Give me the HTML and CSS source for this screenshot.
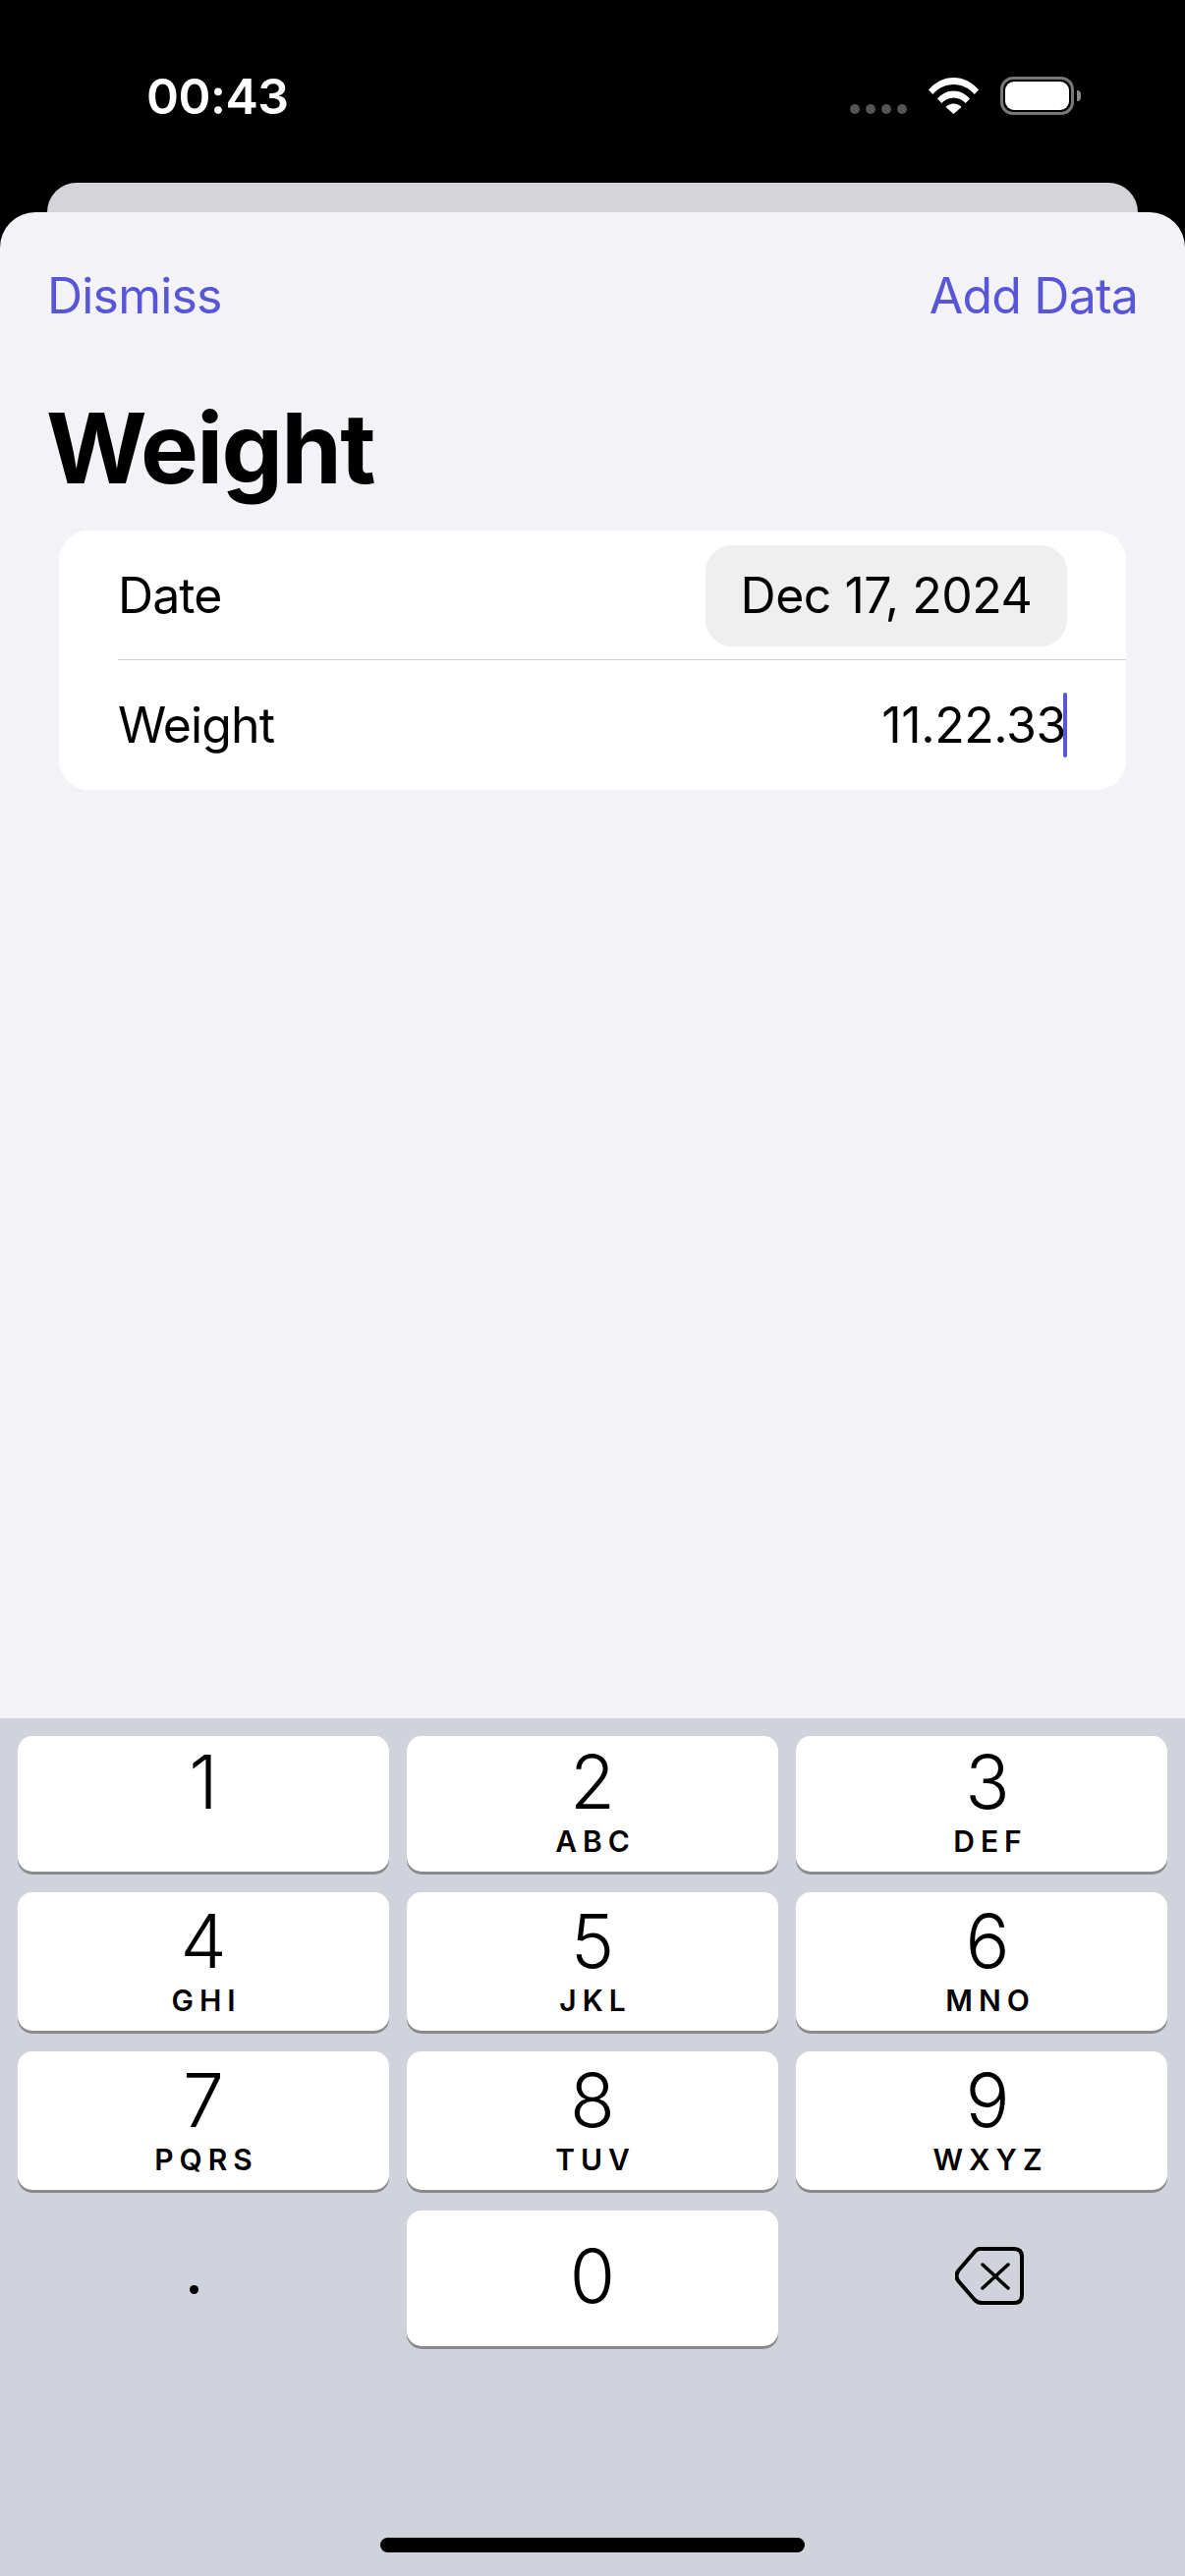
FILE: index.html
```html
<!DOCTYPE html>
<html lang="en">
<head>
<meta charset="UTF-8" />
<meta name="viewport" content="width=device-width, initial-scale=1" />
<title>Weight</title>
<link rel="stylesheet" href="styles.css">
</head>
<body>
  <div id="app">

    <!-- Status bar -->
    <div class="status">
      <span class="time">00:43</span>
      <div class="status-icons">
        <div class="signal"><i></i><i></i><i></i><i></i></div>
        <svg class="wifi" width="51" height="37" viewBox="0 0 51 37">
          <path fill="#fff" d="M0 12.5C6.5 4.8 15.4 0 25.5 0S44.500 4.800 51 12.500L46.700 17C41.300 10.800 34 7 25.500 7S9.700 10.800 4.300 17Z"/>
          <path fill="#fff" d="M9 21.500C13 16.800 19 13.500 25.500 13.500S38 16.800 42 21.500L37.700 26C34.500 22.600 30.300 20.500 25.500 20.500S16.500 22.600 13.300 26Z"/>
          <path fill="#fff" d="M17.500 30C19.500 27.900 22.300 26.600 25.500 26.600S31.500 27.900 33.500 30L25.500 37Z"/>
        </svg>
        <div class="battery"><div class="battery-fill"></div></div>
        <div class="battery-cap"></div>
      </div>
    </div>

    <div class="back-sheet"></div>

    <!-- Sheet -->
    <div class="sheet">
      <div class="nav">
        <span class="nav-btn">Dismiss</span>
        <span class="nav-btn">Add Data</span>
      </div>
      <h1>Weight</h1>
      <div class="card">
        <div class="row">
          <span class="row-label">Date</span>
          <span class="date-pill">Dec 17, 2024</span>
        </div>
        <div class="row row-last">
          <span class="row-label">Weight</span>
          <span class="row-value">11.22.33<span class="caret"></span></span>
        </div>
      </div>
    </div>

    <!-- Keypad -->
    <div class="keyboard">
      <div class="keys">
        <div class="key key-top"><span class="digit">1</span></div>
        <div class="key key-top"><span class="digit">2</span><span class="letters">ABC</span></div>
        <div class="key key-top key-right"><span class="digit">3</span><span class="letters">DEF</span></div>
        <div class="key"><span class="digit">4</span><span class="letters">GHI</span></div>
        <div class="key"><span class="digit">5</span><span class="letters">JKL</span></div>
        <div class="key key-right"><span class="digit">6</span><span class="letters">MNO</span></div>
        <div class="key"><span class="digit">7</span><span class="letters">PQRS</span></div>
        <div class="key"><span class="digit">8</span><span class="letters">TUV</span></div>
        <div class="key key-right"><span class="digit">9</span><span class="letters">WXYZ</span></div>
        <div class="key-plain"><div class="dot"></div></div>
        <div class="key key-zero"><span class="digit">0</span></div>
        <div class="key-plain">
          <svg class="backspace" width="70" height="59" viewBox="0 0 70 59" fill="none" stroke="#000" stroke-linecap="round" stroke-linejoin="round">
            <path stroke-width="4" d="M25 2H60Q68 2 68 10V49Q68 57 60 57H27Q23 57 20 54L3.500 35Q-.5 29.500 3.500 24L19 6Q22 2 25 2Z" />
            <path stroke-width="3.500" d="M28 18L54 42M54 18L28 42" />
          </svg>
        </div>
      </div>
      <div class="home-bar"></div>
    </div>

  </div>
</body>
</html>
```

FILE: styles.css
```css
/* Reset */
* {
  margin: 0; padding: 0; box-sizing: border-box;
}

html, body {
  width: 1206px;
  height: 2622px;
  overflow: hidden;
  background: #000;
  font-family: 'Inter', sans-serif;
  color: #000;
}

#app {
  width: 1206px;
  height: 2622px;
  display: flex;
  flex-direction: column;
}

/* Status bar */
.status {
  height: 186px;
  padding: 68px 106px 0 149px;
  display: flex;
  justify-content: space-between;
  align-items: flex-start;
}

.time {
  color: #fff;
  font-size: 50px;
  font-weight: 600;
  line-height: 60px;
  letter-spacing: -0.5px;
}

.status-icons {
  display: flex;
  align-items: flex-start;
  padding-top: 10px;
}

.signal {
  display: flex;
  gap: 6px;
  margin-top: 28px;
  margin-right: 22px;
}
.signal i {
  display: block;
  width: 10px;
  height: 10px;
  border-radius: 50%;
  background: #555;
}

.wifi {
  margin-top: 1px;
  margin-right: 22px;
}

.battery {
  width: 75px;
  height: 39px;
  border: 3px solid #777;
  border-radius: 13px;
  padding: 2px;
}
.battery-fill {
  height: 100%;
  background: #fff;
  border-radius: 9px;
}
.battery-cap {
  width: 4px;
  height: 11px;
  margin: 14px 0 0 3px;
  background: #8a8a8e;
  border-radius: 0 4px 4px 0;
}

/* Sheets */
.back-sheet {
  height: 30px;
  margin: 0 48px;
  background: #d5d5d9;
  border-radius: 30px 30px 0 0;
}

.sheet {
  flex: 1;
  background: #f2f2f7;
  border-radius: 36px 36px 0 0;
  padding: 0 60px;
}

.nav {
  display: flex;
  justify-content: space-between;
  margin: 0 -12px;
  padding-top: 55px;
}

.nav-btn {
  color: #5856d6;
  font-size: 50px;
  line-height: 60px;
  letter-spacing: -0.8px;
}

h1 {
  margin: 65px 0 0 -13px;
  font-size: 99px;
  font-weight: 700;
  line-height: 120px;
  letter-spacing: -1.7px;
}

.card {
  margin-top: 24px;
  background: #fff;
  border-radius: 30px;
  padding-left: 60px;
}

.row {
  height: 132px;
  display: flex;
  justify-content: space-between;
  align-items: center;
  padding-right: 60px;
  border-bottom: 1px solid #d1d1d6;
}
.row-last {
  border-bottom: none;
}

.row-label {
  font-size: 50px;
  line-height: 60px;
  letter-spacing: -0.9px;
}

.date-pill {
  width: 368px;
  height: 103px;
  margin-top: 1px;
  background: #efeff0;
  border-radius: 27px;
  font-size: 50px;
  letter-spacing: -0.5px;
  display: flex;
  align-items: center;
  justify-content: center;
}

.row-value {
  display: flex;
  align-items: center;
  font-size: 50px;
  line-height: 60px;
  letter-spacing: -0.4px;
}

.caret {
  display: block;
  width: 4px;
  height: 66px;
  margin-left: -3px;
  background: #5856d6;
  border-radius: 2px;
}

/* Keypad */
.keyboard {
  height: 873px;
  background: #d0d3dc;
  padding: 18px 18px 0;
}

.keys {
  display: grid;
  grid-template-columns: repeat(3, 378px);
  grid-template-rows: 138px 141px 141px 138px;
  gap: 21px 18px;
}

.key {
  background: #fff;
  border-radius: 15px;
  box-shadow: 0 3px 0 #8a8a8e;
  display: flex;
  flex-direction: column;
  align-items: center;
  padding-top: 5px;
}

.key-top {
  padding-top: 2px;
}

.key-right {
  padding-left: 12px;
}

.key-zero {
  justify-content: center;
  padding-top: 0;
  padding-bottom: 4px;
}

.digit {
  font-size: 75px;
  font-weight: 350;
  line-height: 90px;
}

.letters {
  font-size: 30px;
  font-weight: 600;
  line-height: 36px;
  letter-spacing: 6px;
  margin: -3px -6px 0 0;
}

.key-plain {
  display: flex;
  align-items: center;
  justify-content: center;
}

.dot {
  width: 9px;
  height: 9px;
  margin: 22px 20px 0 0;
  border-radius: 50%;
  background: #000;
}

.backspace {
  margin: 0 0 6px 16px;
}

.home-bar {
  width: 432px;
  height: 15px;
  margin: 195px auto 0;
  background: #000;
  border-radius: 8px;
}
```
